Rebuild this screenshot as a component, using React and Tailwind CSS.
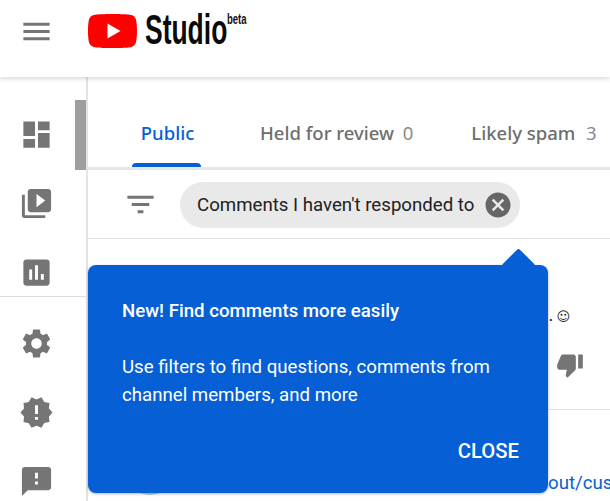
const P = ({ d, className }) => (
  <svg viewBox="0 0 24 24" className={className} fill="currentColor"><path d={d} /></svg>
);
const icons = {
  menu: "M3 18h18v-2H3v2zm0-5h18v-2H3v2zm0-7v2h18V6H3z",
  dash: "M3 13h8V3H3v10zm0 8h8v-6H3v6zm10 0h8V11h-8v10zm0-18v6h8V3h-8z",
  video: "M4 6H2v14c0 1.1.9 2 2 2h14v-2H4V6zm16-4H8c-1.1 0-2 .9-2 2v12c0 1.1.9 2 2 2h12c1.1 0 2-.9 2-2V4c0-1.1-.9-2-2-2zm-8 12.5v-9l6 4.5-6 4.5z",
  chart: "M19 3H5c-1.1 0-2 .9-2 2v14c0 1.1.9 2 2 2h14c1.1 0 2-.9 2-2V5c0-1.1-.9-2-2-2zM9 17H7v-7h2v7zm4 0h-2V7h2v10zm4 0h-2v-4h2v4z",
  gear: "M19.14 12.94c.04-.3.06-.61.06-.94 0-.32-.02-.64-.07-.94l2.03-1.58c.18-.14.23-.41.12-.61l-1.92-3.32c-.12-.22-.37-.29-.59-.22l-2.39.96c-.5-.38-1.03-.7-1.62-.94l-.36-2.54c-.04-.24-.24-.41-.48-.41h-3.84c-.24 0-.43.17-.47.41l-.36 2.54c-.59.24-1.13.57-1.62.94l-2.39-.96c-.22-.08-.47 0-.59.22L2.74 8.87c-.12.21-.08.47.12.61l2.03 1.58c-.05.3-.09.63-.09.94s.02.64.07.94l-2.03 1.58c-.18.14-.23.41-.12.61l1.92 3.32c.12.22.37.29.59.22l2.39-.96c.5.38 1.03.7 1.62.94l.36 2.54c.05.24.24.41.48.41h3.84c.24 0 .44-.17.47-.41l.36-2.54c.59-.24 1.13-.56 1.62-.94l2.39.96c.22.08.47 0 .59-.22l1.92-3.32c.12-.22.07-.47-.12-.61l-2.01-1.58zM12 15.6c-1.98 0-3.6-1.62-3.6-3.6s1.62-3.6 3.6-3.6 3.6 1.62 3.6 3.6-1.62 3.6-3.6 3.6z",
  alert: "M23 12l-2.44-2.78.34-3.68-3.61-.82-1.89-3.18L12 3 8.6 1.54 6.71 4.72l-3.61.81.34 3.68L1 12l2.44 2.78-.34 3.69 3.61.82 1.89 3.18L12 21l3.4 1.46 1.89-3.18 3.61-.82-.34-3.68L23 12zm-10 5h-2v-2h2v2zm0-4h-2V7h2v6z",
  feedback: "M20 2H4c-1.1 0-1.99.9-1.99 2L2 22l4-4h14c1.1 0 2-.9 2-2V4c0-1.1-.9-2-2-2zm-7 12h-2v-2h2v2zm0-4h-2V6h2v4z",
  down: "M15 3H6c-.83 0-1.54.5-1.84 1.22l-3.02 7.05c-.09.23-.14.47-.14.73v2c0 1.1.9 2 2 2h6.31l-.95 4.57-.03.32c0 .41.17.79.44 1.06L9.83 23l6.59-6.59c.36-.36.58-.86.58-1.41V5c0-1.1-.9-2-2-2zm4 0v12h4V3h-4z",
  cancel: "M12 2C6.47 2 2 6.47 2 12s4.47 10 10 10 10-4.47 10-10S17.53 2 12 2zm5 13.59L15.59 17 12 13.41 8.41 17 7 15.59 10.59 12 7 8.41 8.41 7 12 10.59 15.59 7 17 8.41 13.41 12 17 15.59z",
  filter: "M10 18h4v-2h-4v2zM3 6v2h18V6H3zm3 7h12v-2H6v2z",
};

function SideIcon({ d }) {
  return (
    <div className="h-[69px] flex items-center justify-center w-[72px]">
      <P d={d} className="w-[35px] h-[35px] text-[#757575]" />
    </div>
  );
}

export default function App() {
  return (
    <div className="w-[610px] h-[501px] overflow-hidden bg-white relative font-['Roboto',sans-serif]">
      <header className="relative z-20 h-[77px] bg-white shadow-[0_1px_6px_rgba(0,0,0,0.2)] flex items-start">
        <div className="w-[72px] h-[62px] flex items-center justify-center">
          <P d={icons.menu} className="w-[35px] h-[35px] text-[#757575]" />
        </div>
        <svg viewBox="0 0 49 34" className="w-[49px] h-[34px] mt-[14px] ml-[16px]">
          <path fill="#ff0000" d="M47.9 5.3a6 6 0 0 0-4.3-4.2C39.8 0 24.5 0 24.5 0S9.200 0 5.400 1.100A6 6 0 0 0 1.100 5.300C0 9.100 0 17 0 17s0 7.900 1.100 11.700a6 6 0 0 0 4.300 4.200C9.200 34 24.500 34 24.500 34s15.300 0 19.100-1.100a6 6 0 0 0 4.300-4.200C49 24.900 49 17 49 17s0-7.900-1.100-11.700z" />
          <path fill="#fff" d="M19.500 24.500 32.500 17l-13-7.500z" />
        </svg>
        <div className="ml-[8px] mt-[6px] w-[81px] h-[48px] font-['Liberation_Sans',sans-serif] font-bold text-[42px] leading-[48px] text-[#0a0a0a] origin-left scale-x-[0.63] whitespace-nowrap">Studio</div>
        <div className="ml-[1px] mt-[12px] w-[20px] font-['Liberation_Sans',sans-serif] font-bold text-[14px] leading-[14px] text-[#111] origin-left scale-x-[0.68]">beta</div>
      </header>

      <div className="flex h-[424px]">
        <aside className="relative w-[88px] shrink-0 border-r-2 border-[#e3e3e3] pt-[23px]">
          <div className="absolute left-[75px] top-[23px] w-[11px] h-[70px] bg-[#9e9e9e]" />
          <SideIcon d={icons.dash} />
          <SideIcon d={icons.video} />
          <SideIcon d={icons.chart} />
          <div className="h-[1px] bg-[#dedede] -mt-[11px] mb-[12px]" />
          <SideIcon d={icons.gear} />
          <SideIcon d={icons.alert} />
          <SideIcon d={icons.feedback} />
        </aside>

        <main className="flex-1 min-w-0">
          <div className="h-[93px] border-b-[3px] border-[#e6e6e6] flex items-end pl-[44px] font-['Noto_Sans',sans-serif] text-[18.5px] font-medium whitespace-nowrap">
            <div className="w-[69px] h-[90px] flex flex-col items-center">
              <div className="mt-[43px] pl-[2px] leading-[26px] text-[#065fd4]">Public</div>
              <div className="mt-auto w-full h-[4px] rounded-t-[4px] bg-[#065fd4]" />
            </div>
            <div className="ml-[59px] h-[90px] pt-[43px] leading-[26px] text-[#6e6e6e] shrink-0">
              Held for review <span className="ml-[4px] font-normal text-[#8a8a8a]">0</span>
            </div>
            <div className="ml-[58px] h-[90px] pt-[43px] leading-[26px] text-[#6e6e6e] shrink-0">
              Likely spam <span className="ml-[6px] font-normal text-[#8a8a8a]">3</span>
            </div>
          </div>

          <div className="h-[69px] pt-[1px] border-b border-[#e0e0e0] flex items-center">
            <P d={icons.filter} className="ml-[35px] w-[35px] h-[35px] text-[#757575]" />
            <div className="ml-[22px] w-[340px] h-[46px] rounded-full bg-[#e9e9e9] flex items-center pl-[17px] text-[18.67px] text-[#212121] whitespace-nowrap">
              <span className="flex-1">Comments I haven't responded to</span>
              <P d={icons.cancel} className="w-[30px] h-[30px] mr-[7px] text-[#666666]" />
            </div>
          </div>

          <div className="h-[171px] border-b border-[#e0e0e0] flex flex-col items-end pr-[26px]">
            <div className="mt-[62px] h-[28px] leading-[28px] mr-[14px] text-[18.67px] text-[#212121] whitespace-nowrap">.<span className="ml-[3px] font-['DejaVu_Sans',sans-serif] text-[13px]">☺</span></div>
            <P d={icons.down} className="mt-[22px] w-[28px] h-[28px] text-[#757575]" />
          </div>

          <div className="relative flex">
            <div className="shrink-0 ml-[38px] mt-[37px] w-[48px] h-[48px] rounded-full bg-[#a8dadc]" />
            <div className="shrink-0 ml-[374px] mt-[59px] h-[28px] leading-[28px] text-[18.67px] text-[#065fd4] whitespace-nowrap">out/cus</div>
          </div>
        </main>
      </div>

      <div className="absolute z-30 left-[88px] top-[265px] w-[460px] h-[228px] rounded-[8px] bg-[#065fd4] text-white text-[18.67px] shadow-[0_1px_3px_rgba(0,0,0,0.3)] pl-[34px] pr-[29px] flex flex-col">
        <div className="absolute right-[18px] -top-[12px] w-[23px] h-[23px] rotate-45 rounded-tl-[2px] bg-[#065fd4]" />
        <div className="relative mt-[32px] leading-[28px] font-medium">New! Find comments more easily</div>
        <div className="relative mt-[28px] leading-[28px]">Use filters to find questions, comments from<br />channel members, and more</div>
        <div className="relative mt-auto mb-[28px] self-end text-[20.3px] leading-[28px] font-medium">CLOSE</div>
      </div>
    </div>
  );
}
